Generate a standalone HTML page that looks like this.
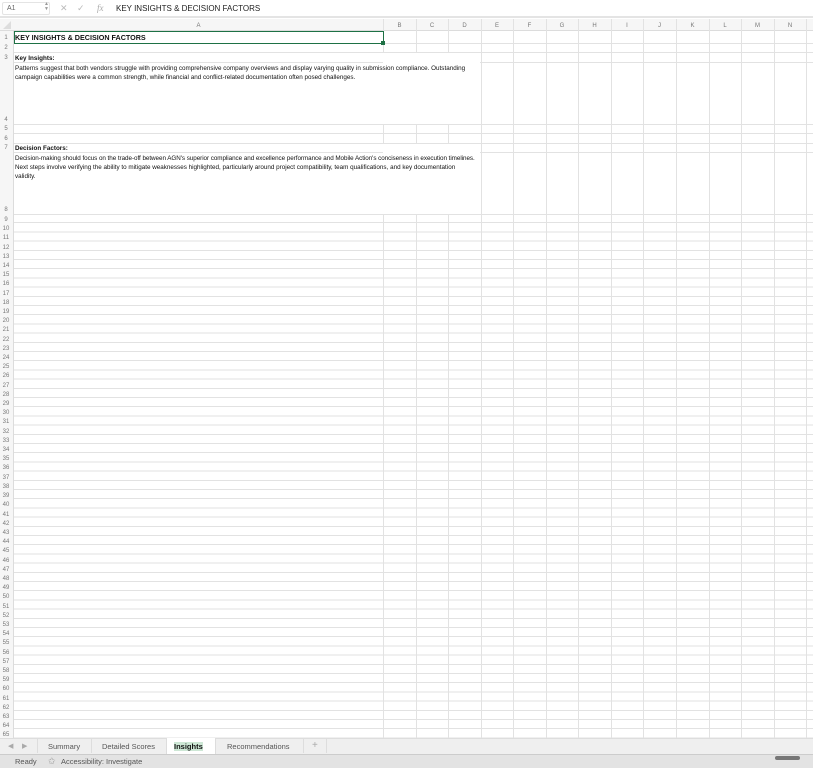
<!DOCTYPE html>
<html><head><meta charset="utf-8"><style>
*{margin:0;padding:0;box-sizing:border-box}
body{width:813px;height:768px;overflow:hidden;background:#fff;font-family:"Liberation Sans",sans-serif;position:relative}
.a{position:absolute}
.fb{left:0;top:0;width:813px;height:18px;background:#fff;border-bottom:2px solid #e4e4e4}
.grid{left:14px;top:31px;width:799px;height:707px;
background:repeating-linear-gradient(to bottom,transparent 0,transparent 8.2px,#e2e2e2 8.2px,#e2e2e2 9.2px) 0 183px/100% 524px no-repeat}
.h{position:absolute;left:14px;width:799px;height:1px;background:#e2e2e2}
.v{position:absolute;top:19px;width:1px;height:719px;background:#e2e2e2}
.colh{left:0;top:19px;width:813px;height:12px;background:#f6f6f6;border-bottom:1px solid #dcdcdc}
.cl{position:absolute;top:4px;font-size:6px;color:#777;text-align:center}
.rh{left:0;top:31px;width:14px;height:707px;background:#f6f6f6;border-right:1px solid #dcdcdc}
.rl{position:absolute;left:0;width:12px;font-size:6px;color:#777;text-align:center}
.t{position:absolute;left:15px;font-size:6.3px;color:#111;white-space:nowrap;line-height:9.2px}
.w{position:absolute;left:383px;width:97px;background:#fff}
</style></head><body>
<div class="a fb">
 <div class="a" style="left:2px;top:2px;width:48px;height:13px;border:1px solid #e4e4e4;border-radius:2px;font-size:7px;color:#666;padding:2px 4px">A1</div>
 <div class="a" style="left:44px;top:2px;font-size:5px;color:#999;line-height:5px">▲<br>▼</div>
 <div class="a" style="left:60px;top:3px;font-size:9px;color:#bbb">✕</div>
 <div class="a" style="left:77px;top:3px;font-size:9px;color:#bbb">✓</div>
 <div class="a" style="left:97px;top:3px;font-size:9px;color:#aaa;font-style:italic;font-family:'Liberation Serif',serif">fx</div>
 <div class="a" style="left:116px;top:4px;font-size:8px;color:#222">KEY INSIGHTS &amp; DECISION FACTORS</div>
</div>
<div class="a colh">
 <div class="cl" style="left:14px;width:369px">A</div>
 <div class="cl" style="left:383px;width:33px">B</div>
 <div class="cl" style="left:416px;width:32px">C</div>
 <div class="cl" style="left:448px;width:33px">D</div>
 <div class="cl" style="left:481px;width:32px">E</div>
 <div class="cl" style="left:513px;width:33px">F</div>
 <div class="cl" style="left:546px;width:32px">G</div>
 <div class="cl" style="left:578px;width:33px">H</div>
 <div class="cl" style="left:611px;width:32px">I</div>
 <div class="cl" style="left:643px;width:33px">J</div>
 <div class="cl" style="left:676px;width:33px">K</div>
 <div class="cl" style="left:709px;width:32px">L</div>
 <div class="cl" style="left:741px;width:33px">M</div>
 <div class="cl" style="left:774px;width:32px">N</div>
 <div class="a" style="left:3px;top:2px;width:0;height:0;border-left:8px solid transparent;border-bottom:8px solid #ddd"></div>
</div>
<div class="a grid"></div>
<div class="h" style="top:43px"></div><div class="h" style="top:52px"></div><div class="h" style="top:62px"></div>
<div class="h" style="top:124px"></div><div class="h" style="top:133px"></div><div class="h" style="top:143px"></div>
<div class="h" style="top:152px"></div><div class="h" style="top:214px"></div>
<div class="v" style="left:383px"></div><div class="v" style="left:416px"></div><div class="v" style="left:448px"></div>
<div class="v" style="left:481px"></div><div class="v" style="left:513px"></div><div class="v" style="left:546px"></div>
<div class="v" style="left:578px"></div><div class="v" style="left:611px"></div><div class="v" style="left:643px"></div>
<div class="v" style="left:676px"></div><div class="v" style="left:709px"></div><div class="v" style="left:741px"></div>
<div class="v" style="left:774px"></div><div class="v" style="left:806px"></div>
<div class="w" style="top:53px;height:71px"></div>
<div class="w" style="top:144px;height:70px"></div>
<div class="a" style="left:14px;top:31px;width:370px;height:13px;border:1.5px solid #1e7145;background:#fff"></div>
<div class="a" style="left:381px;top:41px;width:4px;height:4px;background:#1e7145"></div>
<div class="t" style="top:33px;font-size:7.2px;font-weight:bold">KEY INSIGHTS &amp; DECISION FACTORS</div>
<div class="t" style="top:54px;font-weight:bold">Key Insights:</div>
<div class="t" style="top:63.5px">Patterns suggest that both vendors struggle with providing comprehensive company overviews and display varying quality in submission compliance. Outstanding</div>
<div class="t" style="top:72.5px">campaign capabilities were a common strength, while financial and conflict-related documentation often posed challenges.</div>
<div class="t" style="top:144px;font-weight:bold">Decision Factors:</div>
<div class="t" style="top:153.5px;letter-spacing:-0.05px">Decision-making should focus on the trade-off between AGN's superior compliance and excellence performance and Mobile Action's conciseness in execution timelines.</div>
<div class="t" style="top:162.5px">Next steps involve verifying the ability to mitigate weaknesses highlighted, particularly around project compatibility, team qualifications, and key documentation</div>
<div class="t" style="top:171.5px">validity.</div>
<div class="a rh">
 <div class="rl" style="top:4px">1</div><div class="rl" style="top:14px">2</div><div class="rl" style="top:24px">3</div>
 <div class="rl" style="top:86px">4</div><div class="rl" style="top:95px">5</div><div class="rl" style="top:105px">6</div>
 <div class="rl" style="top:114px">7</div><div class="rl" style="top:176px">8</div>
 <div class="a" style="left:0;top:184px;width:12px;font-size:6px;color:#777;text-align:center;line-height:9.2px;padding-top:1px">9<br>10<br>11<br>12<br>13<br>14<br>15<br>16<br>17<br>18<br>19<br>20<br>21<br>22<br>23<br>24<br>25<br>26<br>27<br>28<br>29<br>30<br>31<br>32<br>33<br>34<br>35<br>36<br>37<br>38<br>39<br>40<br>41<br>42<br>43<br>44<br>45<br>46<br>47<br>48<br>49<br>50<br>51<br>52<br>53<br>54<br>55<br>56<br>57<br>58<br>59<br>60<br>61<br>62<br>63<br>64<br>65</div>
</div>
<div class="a" style="left:0;top:738px;width:813px;height:16px;background:#efefef;border-top:1px solid #ddd;font-size:7.5px;color:#555">
 <div class="a" style="left:8px;top:3px;font-size:7px;color:#aaa">◀</div>
 <div class="a" style="left:22px;top:3px;font-size:7px;color:#aaa">▶</div>
 <div class="a" style="left:37px;top:0;width:1px;height:14px;background:#ddd"></div>
 <div class="a" style="left:48px;top:3px">Summary</div>
 <div class="a" style="left:91px;top:0;width:1px;height:14px;background:#ddd"></div>
 <div class="a" style="left:102px;top:3px">Detailed Scores</div>
 <div class="a" style="left:166px;top:-1px;width:50px;height:16px;background:#fff;border-left:1px solid #ddd;border-right:1px solid #ddd"></div>
 <div class="a" style="left:174px;top:3px;font-weight:bold;color:#111;background:#cde7d5">Insights</div>
 <div class="a" style="left:227px;top:3px">Recommendations</div>
 <div class="a" style="left:303px;top:0;width:1px;height:14px;background:#ddd"></div>
 <div class="a" style="left:312px;top:1px;font-size:10px;color:#aaa">+</div>
 <div class="a" style="left:326px;top:0;width:1px;height:14px;background:#ddd"></div>
</div>
<div class="a" style="left:0;top:754px;width:813px;height:14px;background:#e3e3e3;border-top:1px solid #ccc;font-size:7.5px;color:#555">
 <div class="a" style="left:15px;top:2px">Ready</div>
 <div class="a" style="left:48px;top:1px;font-size:9px;color:#999">✩</div>
 <div class="a" style="left:61px;top:2px">Accessibility: Investigate</div>
 <div class="a" style="left:775px;top:1px;width:25px;height:4px;border-radius:2px;background:#777"></div>
</div>
</body></html>
